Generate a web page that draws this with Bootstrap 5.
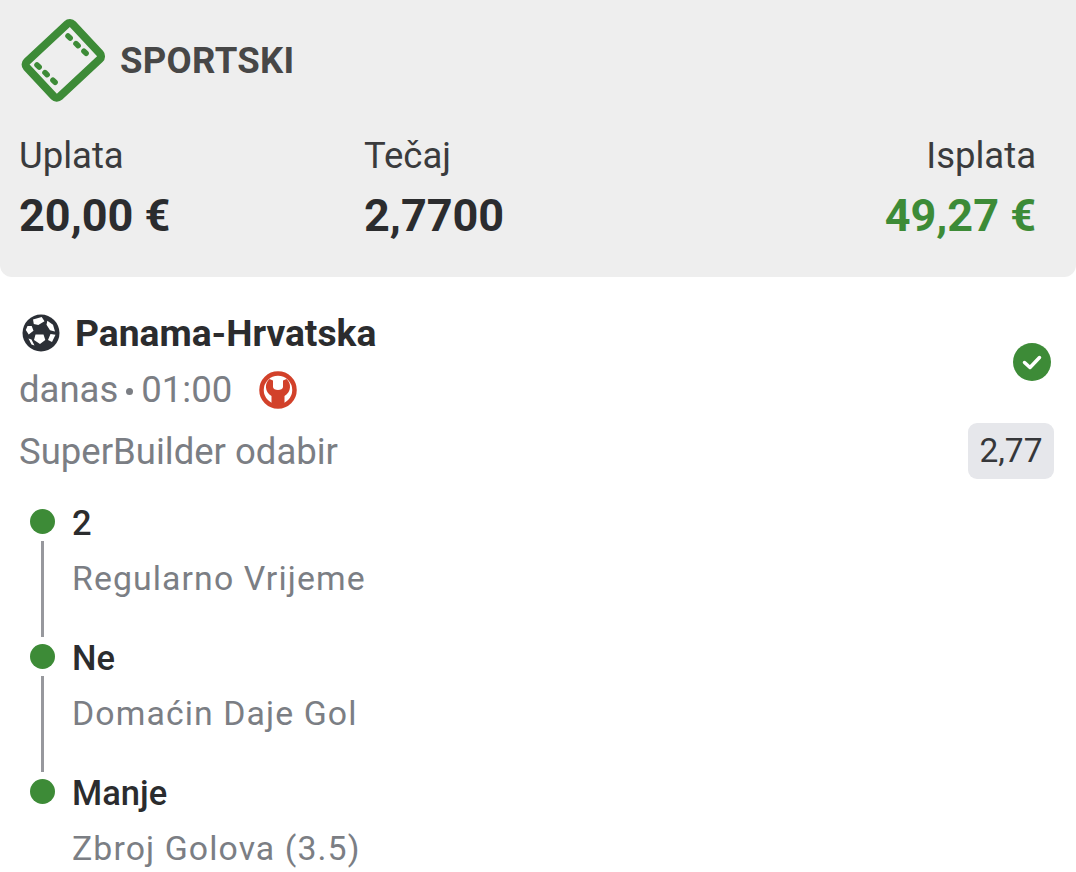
<!DOCTYPE html>
<html lang="en">
<head>
  <meta charset="UTF-8" />
  <meta name="viewport" content="width=device-width, initial-scale=1.0"/>
  <title>Sportski listić</title>
  <link rel="stylesheet" href="https://cdn.jsdelivr.net/npm/bootstrap@5.3.0/dist/css/bootstrap.min.css" />
  <style>
    body { font-family: Roboto, "Liberation Sans", sans-serif; background: #fff; color: #2b2c2e; width: 1076px; height: 872px; overflow: hidden; }
    .slip-head { height: 277px; background: #eeeeee; border-radius: 0 0 12px 12px; padding: 18px 40px 0 19px; }
    .slip-logo { gap: 14px; margin-left: 2px; height: 86px; }
    .slip-type { font-size: 36.5px; font-weight: 700; color: #474747; letter-spacing: .3px; margin-left: -1px; }
    .sum-cols { margin-top: 31px; }
    .sum-col { width: 345px; }
    .sum-col-end { flex: 1; text-align: right; }
    .sum-label { font-size: 36.5px; line-height: 42px; color: #3a3b3d; }
    .sum-value { font-size: 45px; line-height: 54px; font-weight: 700; margin-top: 12px; color: #2b2c2e; }
    .sum-win { color: #3d8b37; }
    .event { padding: 35px 22px 0 19px; }
    .ev-title { font-size: 37.2px; line-height: 42px; font-weight: 700; gap: 15px; margin-left: 3px; }
    .ev-meta { font-size: 36.5px; line-height: 42px; color: #7b7e84; }
    .ev-when { margin-top: 15px; }
    .ev-dot { width: 7px; height: 7px; border-radius: 50%; background: #7b7e84; margin: 3px 8px 0 8px; }
    .ev-wrench { margin-left: 27px; }
    .ev-check { margin-right: 3px; margin-top: 31px; }
    .ev-pick { margin-top: 20px; }
    .odd-pill { background: #e6e7eb; border-radius: 9px; font-size: 33.5px; line-height: 56px; width: 86px; height: 56px; text-align: center; color: #36373a; margin-top: -8px; }
    .legs { margin-top: 23px; margin-left: 11px; }
    .leg { height: 135px; gap: 17px; }
    .leg-mark { width: 25px; }
    .leg-dot { width: 25px; height: 25px; border-radius: 50%; background: #3d8b37; flex: none; margin-top: 7px; }
    .leg-line { width: 3px; height: 96px; background: #97989d; margin-top: 7px; }
    .leg-name { font-size: 34.5px; line-height: 42px; font-weight: 500; color: #2b2c2e; }
    .leg-market { font-size: 33.8px; line-height: 42px; margin-top: 14px; color: #7b7e84; letter-spacing: 1.1px; }
  </style>
</head>
<body>
  <!-- Summary -->
  <div class="slip-head">
    <div class="d-flex align-items-center slip-logo">
      <svg width="86" height="86" viewBox="0 0 86 86" fill="none">
        <rect x="10.500" y="18.500" width="63" height="48" rx="4" transform="rotate(-43 42 42)" stroke="#3d8b37" stroke-width="8"/>
        <path d="M47 18 68 38M16 47 37 67" stroke="#3d8b37" stroke-width="5.500" stroke-linecap="round" stroke-dasharray="3 8"/>
      </svg>
      <span class="slip-type">SPORTSKI</span>
    </div>
    <div class="d-flex sum-cols">
      <div class="sum-col">
        <div class="sum-label">Uplata</div>
        <div class="sum-value">20,00 €</div>
      </div>
      <div class="sum-col">
        <div class="sum-label">Tečaj</div>
        <div class="sum-value">2,7700</div>
      </div>
      <div class="sum-col-end">
        <div class="sum-label">Isplata</div>
        <div class="sum-value sum-win">49,27 €</div>
      </div>
    </div>
  </div>

  <!-- Event -->
  <div class="event">
    <div class="d-flex justify-content-between">
      <div>
        <div class="d-flex align-items-center ev-title">
          <svg width="38" height="38" viewBox="0 0 38 38">
            <circle cx="19" cy="19" r="18.500" fill="#2b2f36"/>
            <path d="M11 5.500 19.700 3 22.500 7.300 16.300 11 11.800 10ZM25.300 6.800 31 10.700 33 17.500 28 16.300 24.500 10.700ZM5.500 12H9.700L11.500 16.700 6.700 20.500 3.800 16ZM13.500 20.500H21.500L23.300 26 18 30 12 26ZM28.500 20 33.500 20.700 30 28 26 26ZM6.500 24.500 9.500 25.500 12.500 31.500 9.500 30.500Z" fill="#fff"/>
          </svg>
          <span>Panama-Hrvatska</span>
        </div>
        <div class="d-flex align-items-center ev-meta ev-when">
          <span>danas</span><span class="ev-dot"></span><span>01:00</span>
          <svg class="ev-wrench" width="38" height="38" viewBox="0 0 38 38">
            <circle cx="19" cy="19" r="16.500" fill="#fff" stroke="#d2412a" stroke-width="4.500"/>
            <path d="M10.500 8C5.500 12 5.500 21 12.500 25V35H25.500V25C32.500 21 32.500 12 27.500 8L24 9.500V16C24 20 14 20 14 16V9.500Z" fill="#d2412a"/>
          </svg>
        </div>
      </div>
      <svg class="ev-check" width="38" height="38" viewBox="0 0 38 38">
        <circle cx="19" cy="19" r="19" fill="#3d8b37"/>
        <path d="M11.500 19.500 17 24.500 26.500 14.500" fill="none" stroke="#fff" stroke-width="3.500" stroke-linecap="round" stroke-linejoin="round"/>
      </svg>
    </div>
    <div class="d-flex justify-content-between ev-pick">
      <div class="ev-meta">SuperBuilder odabir</div>
      <div class="odd-pill">2,77</div>
    </div>

    <div class="legs">
      <div class="d-flex leg">
        <div class="d-flex flex-column align-items-center leg-mark"><div class="leg-dot"></div><div class="leg-line"></div></div>
        <div><div class="leg-name">2</div><div class="leg-market">Regularno Vrijeme</div></div>
      </div>
      <div class="d-flex leg">
        <div class="d-flex flex-column align-items-center leg-mark"><div class="leg-dot"></div><div class="leg-line"></div></div>
        <div><div class="leg-name">Ne</div><div class="leg-market">Domaćin Daje Gol</div></div>
      </div>
      <div class="d-flex leg">
        <div class="d-flex flex-column align-items-center leg-mark"><div class="leg-dot"></div></div>
        <div><div class="leg-name">Manje</div><div class="leg-market">Zbroj Golova (3.5)</div></div>
      </div>
    </div>
  </div>
  <script src="https://cdn.jsdelivr.net/npm/bootstrap@5.3.0/dist/js/bootstrap.bundle.min.js"></script>
</body>
</html>
